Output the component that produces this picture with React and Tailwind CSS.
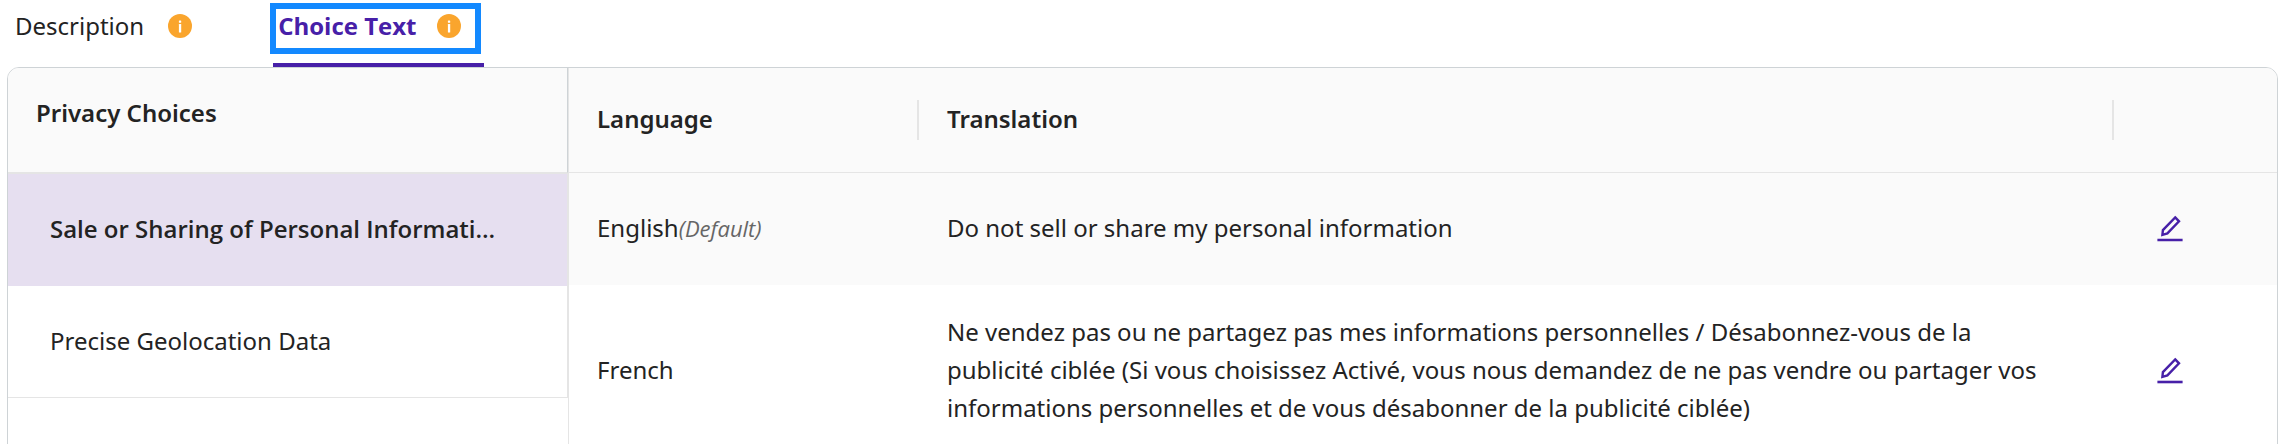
const choices = [
  { label: "Sale or Sharing of Personal Information", selected: true },
  { label: "Precise Geolocation Data", selected: false },
];

const translations = [
  {
    language: "English",
    isDefault: true,
    text: "Do not sell or share my personal information",
  },
  {
    language: "French",
    isDefault: false,
    text: "Ne vendez pas ou ne partagez pas mes informations personnelles / Désabonnez-vous de la publicité ciblée (Si vous choisissez Activé, vous nous demandez de ne pas vendre ou partager vos informations personnelles et de vous désabonner de la publicité ciblée)",
  },
];

function InfoIcon() {
  return (
    <svg className="size-6 shrink-0" viewBox="0 0 24 24" aria-hidden="true">
      <circle cx="12" cy="12" r="12" fill="#faa52d" />
      <rect x="10.9" y="6.4" width="2.3" height="2.4" rx="0.5" fill="#fff" />
      <rect x="10.9" y="10" width="2.3" height="8.6" rx="0.4" fill="#fff" />
    </svg>
  );
}

function EditIcon() {
  return (
    <svg className="size-7" viewBox="0 0 28 28" fill="none" stroke="#4720a8" aria-hidden="true">
      <path d="M19.2 2.4 L23 6.3 L11.4 18.4 L6.4 19.8 L6.9 15.1 Z" strokeWidth="2.4" strokeLinejoin="miter" />
      <path d="M1.4 25 H26.6" strokeWidth="2.6" />
    </svg>
  );
}

export default function App() {
  return (
    <div className="h-screen overflow-hidden bg-white pl-[7px] pr-[18px] font-['Noto_Sans','Open_Sans',sans-serif] text-2xl leading-[38px] text-[#232323]">
      <div role="tablist" className="flex h-[67px] items-start">
        <button
          type="button"
          role="tab"
          aria-selected="false"
          className="flex h-[54px] items-center gap-6 pb-[2px] pl-2"
        >
          Description
          <InfoIcon />
        </button>
        <div className="ml-[78px] flex h-[67px] flex-col pt-[3px]">
          <button
            type="button"
            role="tab"
            aria-selected="true"
            className="flex h-[51px] items-center gap-5 border-6 border-[#1389ff] pb-[5px] pl-[2px] pr-[14px] font-['Open_Sans','Noto_Sans',sans-serif] font-bold text-[#4720a8]"
          >
            Choice Text
            <InfoIcon />
          </button>
          <div className="-mr-[3px] ml-[3px] mt-[9px] h-1 bg-[#4720a8]" />
        </div>
      </div>

      <div className="flex min-h-[500px] overflow-hidden rounded-t-xl border border-[#ced3d6]">
        <section className="w-[561px] shrink-0 border-r border-[#e5e5e5]">
          <h2 className="h-[105px] border-b border-r border-b-[#e5e5e5] border-r-[#ced3d6] bg-[#fafafa] pl-7 pt-[26px] font-semibold">
            Privacy Choices
          </h2>
          <ul className="border-r border-t border-[#e5e5e5]">
            {choices.map((choice) => (
              <li
                key={choice.label}
                className={
                  choice.selected
                    ? "h-28 border-b border-[#e6dff0] bg-[#e6dff0] font-['Open_Sans','Noto_Sans',sans-serif] font-semibold"
                    : "h-28 border-b border-[#e5e5e5]"
                }
              >
                <button type="button" className="block h-full w-full truncate pb-[2px] pl-[42px] pr-[68px] text-left">
                  {choice.label}
                </button>
              </li>
            ))}
          </ul>
        </section>

        <div className="min-w-0 flex-1">
          <table className="w-full table-fixed border-separate border-spacing-0 text-left">
            <colgroup>
              <col className="w-[350px]" />
              <col />
              <col className="w-[163px]" />
            </colgroup>
            <thead className="bg-[#fafafa]">
              <tr className="h-[105px]">
                <th scope="col" className="border-b border-[#e5e5e5] p-0 font-semibold">
                  <div className="flex h-10 items-center border-r-2 border-[#e5e5e5] pb-[2px] pl-7">Language</div>
                </th>
                <th scope="col" className="border-b border-[#e5e5e5] p-0 font-semibold">
                  <div className="flex h-10 items-center border-r-2 border-[#e5e5e5] pb-[2px] pl-7">Translation</div>
                </th>
                <th scope="col" aria-label="Actions" className="border-b border-[#e5e5e5]" />
              </tr>
            </thead>
            <tbody>
              {translations.map((row) => (
                <tr key={row.language} className="odd:bg-[#fafafa]">
                  <td className="pb-[30px] pl-7 pt-7">
                    {row.language}
                    {row.isDefault && <em className="font-['Open_Sans','Noto_Sans',sans-serif] text-[22px] text-[#666666]">(Default)</em>}
                  </td>
                  <td className="pb-[30px] pl-7 pr-14 pt-7">{row.text}</td>
                  <td className="py-7 pl-7">
                    <button
                      type="button"
                      aria-label={"Edit " + row.language + " translation"}
                      className="flex size-14 items-center justify-center"
                    >
                      <EditIcon />
                    </button>
                  </td>
                </tr>
              ))}
            </tbody>
          </table>
        </div>
      </div>
    </div>
  );
}
